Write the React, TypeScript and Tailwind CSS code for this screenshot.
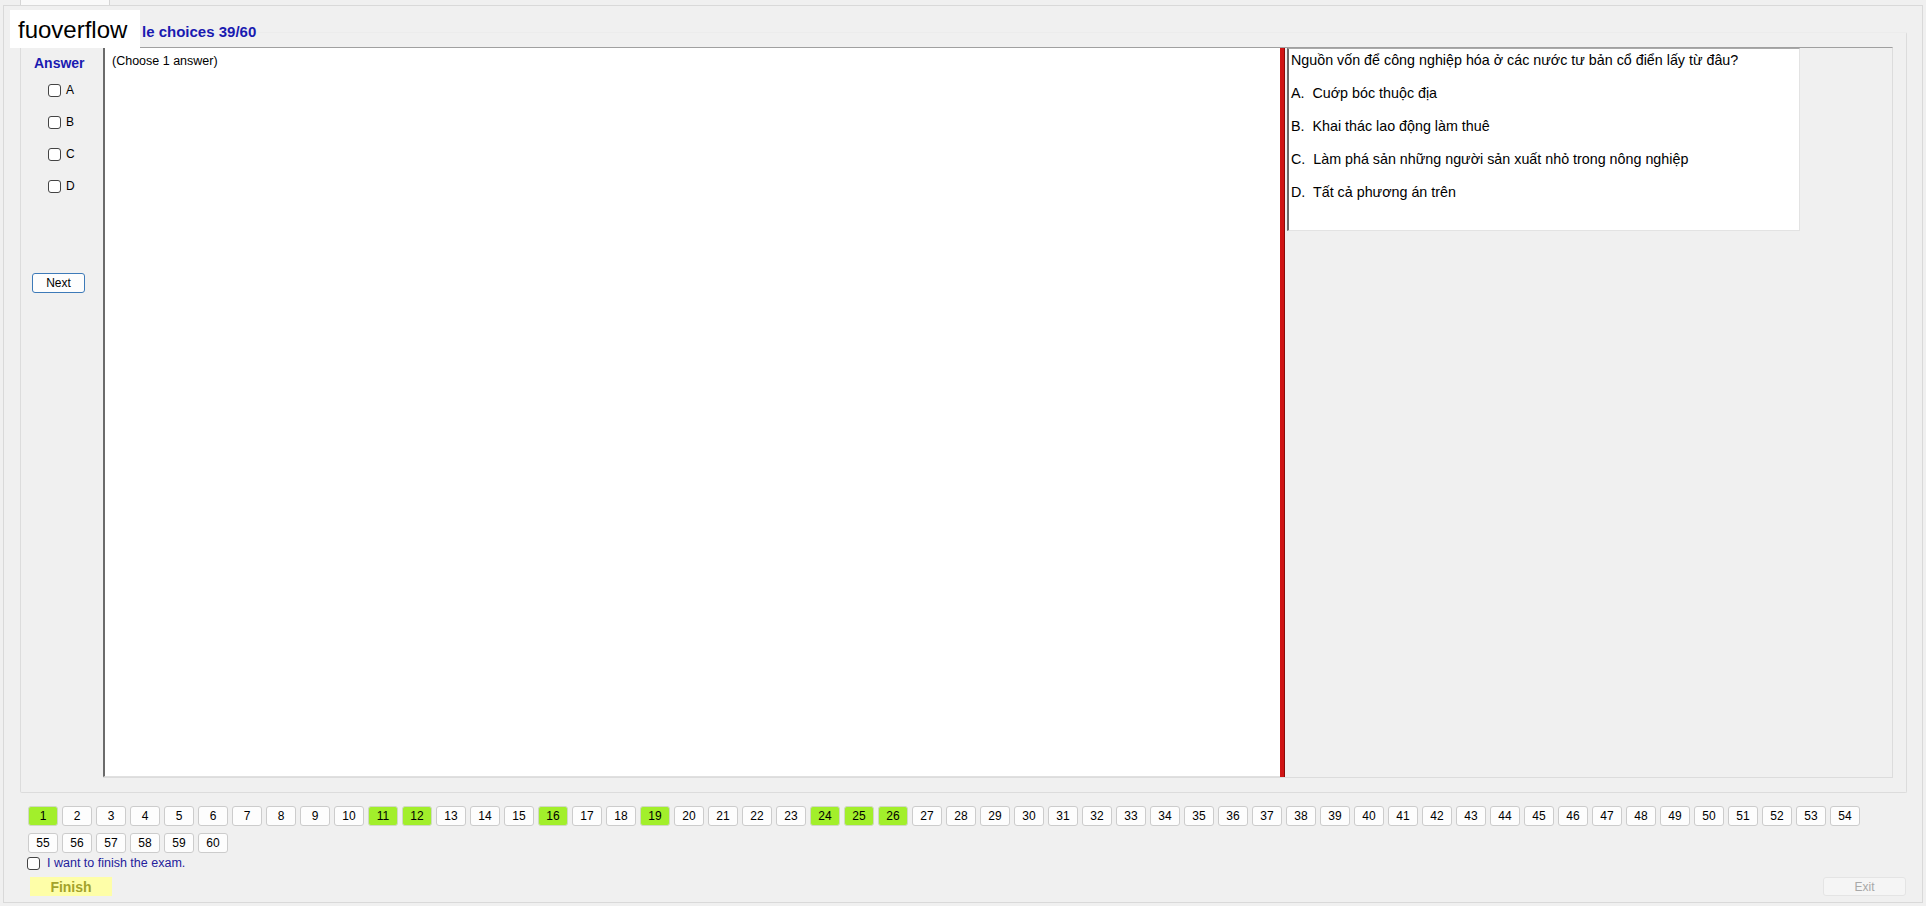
import React from "react";

const GREEN = new Set([1, 11, 12, 16, 19, 24, 25, 26]);

function Box() {
  return <span className="inline-block w-[13px] h-[13px] border border-[#444] rounded-[3px] bg-white shrink-0" />;
}

export default function App() {
  const nums = Array.from({ length: 60 }, (_, i) => i + 1);
  return (
    <div className="w-[1926px] h-[906px] bg-[#f0f0f0] relative overflow-hidden flex flex-col font-['Liberation_Sans',Arial,sans-serif] text-black">
      {/* tab header */}
      <div className="h-[5px] flex shrink-0">
        <div className="ml-[20px] w-[90px] h-[5px] bg-[#f9f9f9] border-x border-[#d5d5d5]" />
      </div>
      {/* tab page */}
      <div className="mx-[3px] h-[898px] border border-[#d9d9d9] bg-[#f0f0f0] flex flex-col shrink-0">
        {/* group box */}
        <div className="mt-[26px] ml-[16px] mr-[15px] h-[761px] border border-[#dcdcdc] border-t-[#ececec] rounded-[2px] flex flex-col shrink-0">
          <div className="-mt-[10px] ml-[119px] px-[2px] w-fit bg-[#f0f0f0] text-[15px] leading-[17px] font-bold text-[#1a1ab0]">
            le choices 39/60
          </div>
          <div className="mt-[7px] h-[731px] flex">
            {/* left column */}
            <div className="w-[82px] flex flex-col shrink-0">
              <div className="mt-[8px] pl-[13px] text-[14px] leading-[16px] font-bold text-[#1a1ab0]">Answer</div>
              <div className="mt-[3px] flex flex-col">
                {["A", "B", "C", "D"].map((l) => (
                  <div key={l} className="h-[32px] flex items-center pl-[27px] gap-[5px]">
                    <Box />
                    <span className="text-[12px] leading-none">{l}</span>
                  </div>
                ))}
              </div>
              <button className="mt-[71px] ml-[11px] w-[53px] h-[20px] border border-[#3d7ab8] rounded-[3px] bg-[#fdfdfd] text-[12px] leading-none flex items-center justify-center">
                Next
              </button>
            </div>
            {/* split container */}
            <div className="flex-1 mr-[13px] flex border-t border-[#a0a0a0] border-r border-b border-r-[#dcdcdc] border-b-[#dcdcdc]">
              <div className="w-[1177px] bg-white border-l-2 border-[#6b6b6b] border-b border-b-[#e0e0e0] shrink-0">
                <div className="pl-[7px] pt-[6px] text-[12.5px] leading-[15px]">(Choose 1 answer)</div>
              </div>
              <div className="w-[5px] bg-[#d01414] border-r border-[#8a0a0a] shrink-0" />
              <div className="flex-1 pl-[2px]">
                <div className="w-[513px] h-[183px] bg-white border-l-2 border-[#6b6b6b] border-t border-t-[#a9a9a9] border-r border-b border-r-[#e3e3e3] border-b-[#e3e3e3] pl-[2px] pt-[3px] text-[14.3px] leading-[16px]">
                  <div>Nguồn vốn để công nghiệp hóa ở các nước tư bản cổ điển lấy từ đâu?</div>
                  <div className="mt-[17px] whitespace-pre">A.  Cuớp bóc thuộc địa</div>
                  <div className="mt-[17px] whitespace-pre">B.  Khai thác lao động làm thuê</div>
                  <div className="mt-[17px] whitespace-pre">C.  Làm phá sản những người sản xuất nhỏ trong nông nghiệp</div>
                  <div className="mt-[17px] whitespace-pre">D.  Tất cả phương án trên</div>
                </div>
              </div>
            </div>
          </div>
        </div>
        {/* question number buttons */}
        <div className="mt-[13px] ml-[24px] w-[1840px] flex flex-wrap gap-x-[4px] gap-y-[7px]">
          {nums.map((n) => (
            <div
              key={n}
              className={
                GREEN.has(n)
                  ? "w-[30px] h-[20px] border border-[#cfd8c4] rounded-[3px] bg-[#a2ef2b] text-[12px] leading-none flex items-center justify-center"
                  : "w-[30px] h-[20px] border border-[#cccccc] rounded-[3px] bg-[#fdfdfd] text-[12px] leading-none flex items-center justify-center"
              }
            >
              {n}
            </div>
          ))}
        </div>
        <div className="mt-[3px] ml-[23px] h-[14px] flex items-center gap-[7px]">
          <Box />
          <span className="text-[12.5px] leading-none text-[#24209c]">I want to finish the exam.</span>
        </div>
        <div className="mt-[7px] flex justify-between items-center">
          <div className="ml-[26px] w-[82px] h-[19px] bg-[#fefea8] flex items-center justify-center text-[14px] font-bold text-[#a3a32b] leading-none">
            Finish
          </div>
          <div className="mr-[16px] w-[83px] h-[19px] bg-[#f5f5f5] border border-[#e4e4e4] rounded-[3px] flex items-center justify-center text-[12px] text-[#a8a8a8] leading-none">
            Exit
          </div>
        </div>
      </div>
      {/* watermark overlay */}
      <div className="absolute left-[10px] top-[10px] w-[130px] h-[38px] bg-white pl-[8px] pt-[1px] text-[24px] leading-[38px] text-black">
        fuoverflow
      </div>
    </div>
  );
}
